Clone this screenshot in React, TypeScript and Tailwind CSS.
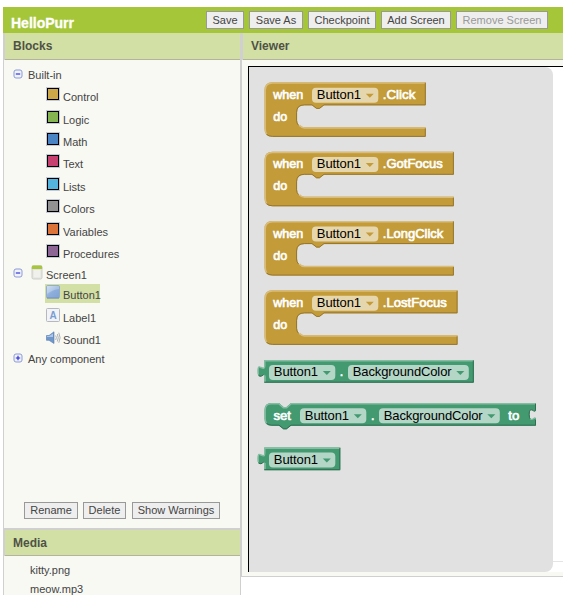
import React from "react";

const GOLD = { fill: "#c39b39", light: "#d9bd7c", dark: "#8f7129", pill: "#e6d6ad" };
const GREEN = { fill: "#439970", light: "#85bda2", dark: "#2f6d50", pill: "#b4d6c6" };
type Palette = typeof GOLD;

function Btn({ children, w, h = "h-[18px]", disabled = false }: { children: string; w: string; h?: string; disabled?: boolean }) {
  return (
    <button
      disabled={disabled}
      className={`${w} ${h} flex shrink-0 items-center justify-center border border-[#999] bg-[#eee] text-[11px] leading-none whitespace-nowrap ${disabled ? "text-[#999]" : "text-[#444]"}`}
    >
      {children}
    </button>
  );
}

function PanelTitle({ children, h = "h-[27px]" }: { children: string; h?: string }) {
  return (
    <h2 className={`${h} shrink-0 border-b border-[#b3b3a0] bg-[#d2e0a6] pl-2 text-xs leading-[27px] font-bold text-[#4f5245]`}>
      {children}
    </h2>
  );
}

function Toggle({ open }: { open: boolean }) {
  return (
    <svg width="10" height="10" viewBox="0 0 10 10" className="shrink-0">
      <rect x="1" y="1" width="8" height="8" rx="2" fill="#f0f3ff" stroke="#8d9bd3" strokeWidth="1" />
      <path d={open ? "M2.8 5H7.2" : "M2.8 5H7.2M5 2.8V7.2"} stroke="#2222cc" strokeWidth="1.1" />
    </svg>
  );
}

const categories = [
  { name: "Control", color: "#cca848", h: "h-[23px]" },
  { name: "Logic", color: "#85b550", h: "h-[22px]" },
  { name: "Math", color: "#4b84c4", h: "h-[22px]" },
  { name: "Text", color: "#c6416f", h: "h-[23px]" },
  { name: "Lists", color: "#55b4dd", h: "h-[22px]" },
  { name: "Colors", color: "#929292", h: "h-[23px]" },
  { name: "Variables", color: "#dc7339", h: "h-[22px]" },
  { name: "Procedures", color: "#8d6696", h: "h-[20px]" },
];

function ScreenIcon() {
  return (
    <svg width="12" height="15" viewBox="0 0 12 15">
      <rect x="1" y="0.8" width="10" height="13.2" rx="1.5" fill="#e3e3df" stroke="#cfcfca" />
      <path d="M0.8 4V2Q.8 .6 2.2 .6H9.8Q11.2 .6 11.2 2V4Z" fill="#a7c63d" />
      <rect x="2.5" y="5" width="7" height="7.5" fill="#f0f0ed" />
    </svg>
  );
}

function ButtonIcon() {
  return (
    <svg width="14" height="14" viewBox="0 0 14 14">
      <defs>
        <linearGradient id="btnface" x1="0" y1="0" x2="1" y2="1">
          <stop offset="0" stopColor="#c5d7ef" />
          <stop offset="0.5" stopColor="#8eafdb" />
          <stop offset="1" stopColor="#7fa3d6" />
        </linearGradient>
      </defs>
      <rect x="0.5" y="0.5" width="13" height="12.5" rx="1.2" fill="url(#btnface)" stroke="#8aa5cc" strokeWidth="0.8" />
      <path d="M1 1H13V4Q7 4.5 1 9Z" fill="#fff" opacity="0.25" />
      <path d="M1 13H13" stroke="#7690ba" />
    </svg>
  );
}

function LabelIcon() {
  return (
    <svg width="14" height="14" viewBox="0 0 14 14">
      <rect x="0.5" y="0.5" width="13" height="13" rx="1" fill="#f1f3f6" stroke="#b5b8be" />
      <text x="7" y="10.5" textAnchor="middle" fontSize="10" fontWeight="bold" fill="#799fd2">A</text>
    </svg>
  );
}

function SoundIcon() {
  return (
    <svg width="15" height="14" viewBox="0 0 15 14" fill="none">
      <path d="M0.5 4.5H3L8 .8V12.5L3 9.3H.5Z" fill="#6f97ca" stroke="#587bac" strokeWidth="0.6" />
      <path d="M1 5H3.3L7 2.4V6H1Z" fill="#adc6e5" />
      <path d="M9.7 4.5Q11 6.7 9.7 9M11.3 3Q13.2 6.7 11.3 10.5M12.8 1.7Q15.4 6.7 12.8 11.8" stroke="#a3a7ad" strokeWidth="0.9" />
    </svg>
  );
}

function Tree() {
  return (
    <div className="flex flex-1 flex-col pt-[8px] pl-[9px] text-[11px] leading-[12px] text-[#444]">
      <div className="flex h-[19px] items-start gap-[5px] pt-px">
        <Toggle open />
        <span>Built-in</span>
      </div>
      {categories.map((c) => (
        <div key={c.name} className={`${c.h} flex shrink-0 items-start gap-[3px] pl-[33px]`}>
          <span className="size-[14px] border border-[#c3cad6] bg-black p-px">
            <span className="block size-[10px]" style={{ backgroundColor: c.color }} />
          </span>
          <span className="pt-[4px]">{c.name}</span>
        </div>
      ))}
      <div className="flex h-[20px] shrink-0 items-start">
        <span className="pt-[4px]"><Toggle open /></span>
        <span className="ml-[8px] pt-px"><ScreenIcon /></span>
        <span className="ml-[3px] pt-[5px]">Screen1</span>
      </div>
      <div className="ml-[32px] flex h-[19px] w-[55px] shrink-0 items-start gap-[3px] bg-[#d2e0a6] pt-px pl-px">
        <span className="w-[14px] shrink-0"><ButtonIcon /></span>
        <span className="pt-[4px]">Button1</span>
      </div>
      <div className="mt-[5px] flex h-[23px] shrink-0 items-start gap-[3px] pl-[33px]">
        <LabelIcon />
        <span className="pt-[4px]">Label1</span>
      </div>
      <div className="flex h-[22px] shrink-0 items-start gap-[2px] pl-[33px]">
        <SoundIcon />
        <span className="pt-[3px]">Sound1</span>
      </div>
      <div className="flex items-start gap-[5px]">
        <Toggle open={false} />
        <span>Any component</span>
      </div>
      <div className="mt-auto mb-[9px] ml-[11px] flex">
        <Btn w="w-[54px]" h="h-[17px]">Rename</Btn>
        <span className="ml-[5px]"><Btn w="w-[43px]" h="h-[17px]">Delete</Btn></span>
        <span className="ml-[6px]"><Btn w="w-[88px]" h="h-[17px]">Show Warnings</Btn></span>
      </div>
    </div>
  );
}

function Label({ x, y, w, children }: { x: number; y: number; w: number; children: string }) {
  return (
    <text x={x} y={y} textLength={w} lengthAdjust="spacingAndGlyphs" fontSize="13" fill="#fff" stroke="#fff" strokeWidth="0.65">
      {children}
    </text>
  );
}

function Pill({ x, y, w, p, children }: { x: number; y: number; w: number; p: Palette; children: string }) {
  return (
    <g>
      <rect x={x} y={y} width={w} height="15" rx="4" fill={p.pill} />
      <text x={x + 4.8} y={y + 11.3} textLength={w - 22} fontSize="13" fill="#000">{children}</text>
      <path d={`M${x + w - 12.5} ${y + 6}h8l-4 4z`} fill={p.fill} />
    </g>
  );
}

function EventBlock({ y, w, event, textW }: { y: number; w: number; event: string; textW: number }) {
  const p = GOLD;
  return (
    <g transform={`translate(264.5 ${y})`}>
      <path
        d={`M0 8Q0 0 8 0H${w}V23H59.5L55 26.5H52L47.5 23H40Q32.5 23 32.5 30V38Q32.5 45 40 45H${w}V54.5H8Q0 54.5 0 46.5Z`}
        fill={p.fill}
      />
      <path d={`M2.3 52Q.7 50 .7 46.5V8Q.7 .7 8 .7H${w}M35 43Q37 45.6 40 45.6H${w}`} fill="none" stroke={p.light} strokeWidth="1.5" />
      <path
        d={`M${w - 0.4} .5V22.6H59.5L55 26.1H52L47.5 22.6H40Q32.1 22.6 32.1 30V38Q32.1 41 34 43M${w - 0.4} 46V54.1H8Q4 54.1 2 52`}
        fill="none" stroke={p.dark} strokeWidth="0.9"
      />
      <Label x={8.8} y={16.7} w={30}>when</Label>
      <Pill x={47.5} y={5.4} w={66.3} p={p}>Button1</Pill>
      <Label x={118.3} y={16.7} w={textW}>{event}</Label>
      <Label x={8.8} y={38.7} w={14}>do</Label>
    </g>
  );
}

function ValueBlock({ y, w, children }: { y: number; w: number; children: React.ReactNode }) {
  const p = GREEN;
  return (
    <g transform={`translate(264.3 ${y})`}>
      <path d={`M0 0H${w}V22.7H0V15.5C0 13-1 15.5-3.5 16.3C-6 17-6.5 15-6.5 11.5C-6.5 7-6 6-3.5 7.3C-1 8.5 0 9 0 6Z`} fill={p.fill} />
      <path d={`M-6 14.5C-6.5 7-6 6-3.5 7.5C-1 8.5 .5 9 .5 6V.7H${w}M.7 15.5V22`} fill="none" stroke={p.light} strokeWidth="1.4" />
      <path d={`M${w - 0.5} .5V22.2H0M-5.7 15.7Q-3.5 17.5-.5 14.6`} fill="none" stroke={p.dark} strokeWidth="1" />
      {children}
    </g>
  );
}

function SetterBlock() {
  const p = GREEN;
  const socket = "V6C271.5 9 270.5 8.5 268.5 7.5C266 6 265 7 265 11.5C265 16 266 17 268.5 16C270.5 15 271.5 14.5 271.5 16V22.7";
  return (
    <g transform="translate(264.5 403)">
      <path d={`M0 7Q0 0 7 0H14.5L19 4H22L26.5 0H271.5${socket}H26.5L22 26.3H19L14.5 22.7H7Q0 22.7 0 15.7Z`} fill={p.fill} />
      <path d="M2.2 20.5Q.7 18.5 .7 15.7V7Q.7 .7 7 .7H14.3L18.8 4.7H22.2L26.7 .7H271.5M266 16Q267 16.8 268.5 16T271 14.7" fill="none" stroke={p.light} strokeWidth="1.4" />
      <path d="M271 .7V6C271 9 270 8.5 268.5 7.5C266 6 264.7 7 264.7 11.5Q264.7 15 265.7 15.8M271 17V22.2H26.5L22 25.8H19L14.5 22.2H7Q4 22.2 2 20.3" fill="none" stroke={p.dark} strokeWidth="1" />
      <Label x={9} y={16.5} w={17.5}>set</Label>
      <Pill x={35.5} y={5.2} w={66.3} p={p}>Button1</Pill>
      <Label x={106.4} y={16.5} w={3.5}>.</Label>
      <Pill x={114.5} y={5.2} w={120.8} p={p}>BackgroundColor</Pill>
      <Label x={243.8} y={16.5} w={11}>to</Label>
    </g>
  );
}

function Blocks() {
  return (
    <svg width="304" height="505" viewBox="249 67 304 505" className="block">
      <EventBlock y={82.3} w={161.2} event=".Click" textW={32.5} />
      <EventBlock y={151.7} w={189.3} event=".GotFocus" textW={60} />
      <EventBlock y={221} w={189.3} event=".LongClick" textW={60.5} />
      <EventBlock y={290.3} w={193} event=".LostFocus" textW={64} />
      <ValueBlock y={360} w={209.5}>
        <Pill x={4.7} y={4.9} w={66.3} p={GREEN}>Button1</Pill>
        <Label x={75.5} y={16.2} w={3.5}>.</Label>
        <Pill x={83.7} y={4.9} w={120.8} p={GREEN}>BackgroundColor</Pill>
      </ValueBlock>
      <SetterBlock />
      <ValueBlock y={447.5} w={76}>
        <Pill x={4.7} y={4.9} w={66.3} p={GREEN}>Button1</Pill>
      </ValueBlock>
    </svg>
  );
}

export default function App() {
  return (
    <div className="flex h-[595px] w-[563px] flex-col overflow-hidden bg-white pt-[7px] pl-[3px] font-['Liberation_Sans',Arial,sans-serif]">
      <header className="flex h-[26px] shrink-0 items-start bg-[#a5c639] pt-1">
        <h1 className="w-[203px] shrink-0 pt-[3px] pl-2 text-sm leading-[18px] font-bold text-white [-webkit-text-stroke:0.3px_#fff]">HelloPurr</h1>
        <div className="flex gap-[5px]">
          <Btn w="w-[38px]">Save</Btn>
          <Btn w="w-[54px]">Save As</Btn>
          <Btn w="w-[68px]">Checkpoint</Btn>
          <Btn w="w-[70px]">Add Screen</Btn>
          <Btn w="w-[92px]" disabled>Remove Screen</Btn>
        </div>
      </header>
      <div className="flex min-h-0 flex-1">
        <aside className="flex w-[238px] shrink-0 flex-col border-r border-l border-[#d0d0d0] bg-[#f8f9f3]">
          <section className="flex h-[495px] shrink-0 flex-col">
            <div className="border-l border-[#d0d0d0]"><PanelTitle>Blocks</PanelTitle></div>
            <Tree />
          </section>
          <section className="border-t-2 border-[#d0d0d0]">
            <div className="border-l border-[#d0d0d0]"><PanelTitle h="h-[26px]">Media</PanelTitle></div>
            <ul className="pt-[5px] pl-[26px] text-[11px] leading-[19px] text-[#444]">
              <li>kitty.png</li>
              <li>meow.mp3</li>
            </ul>
          </section>
        </aside>
        <main className="flex h-[544px] min-w-0 flex-1 flex-col border-b border-l border-[#d0d0d0] bg-[#f8f9f3]">
          <div className="border-l border-[#d0d0d0]"><PanelTitle>Viewer</PanelTitle></div>
          <div className="mt-[6px] ml-[6px] h-[506px] overflow-hidden border-t border-l border-black bg-white bg-[linear-gradient(#e4e4e4,#e4e4e4)] bg-[length:100%_1px] bg-[position:0_494px] bg-no-repeat">
            <div className="h-[505px] w-[304px] rounded-r-lg bg-[#e1e1e1]">
              <Blocks />
            </div>
          </div>
        </main>
      </div>
    </div>
  );
}
